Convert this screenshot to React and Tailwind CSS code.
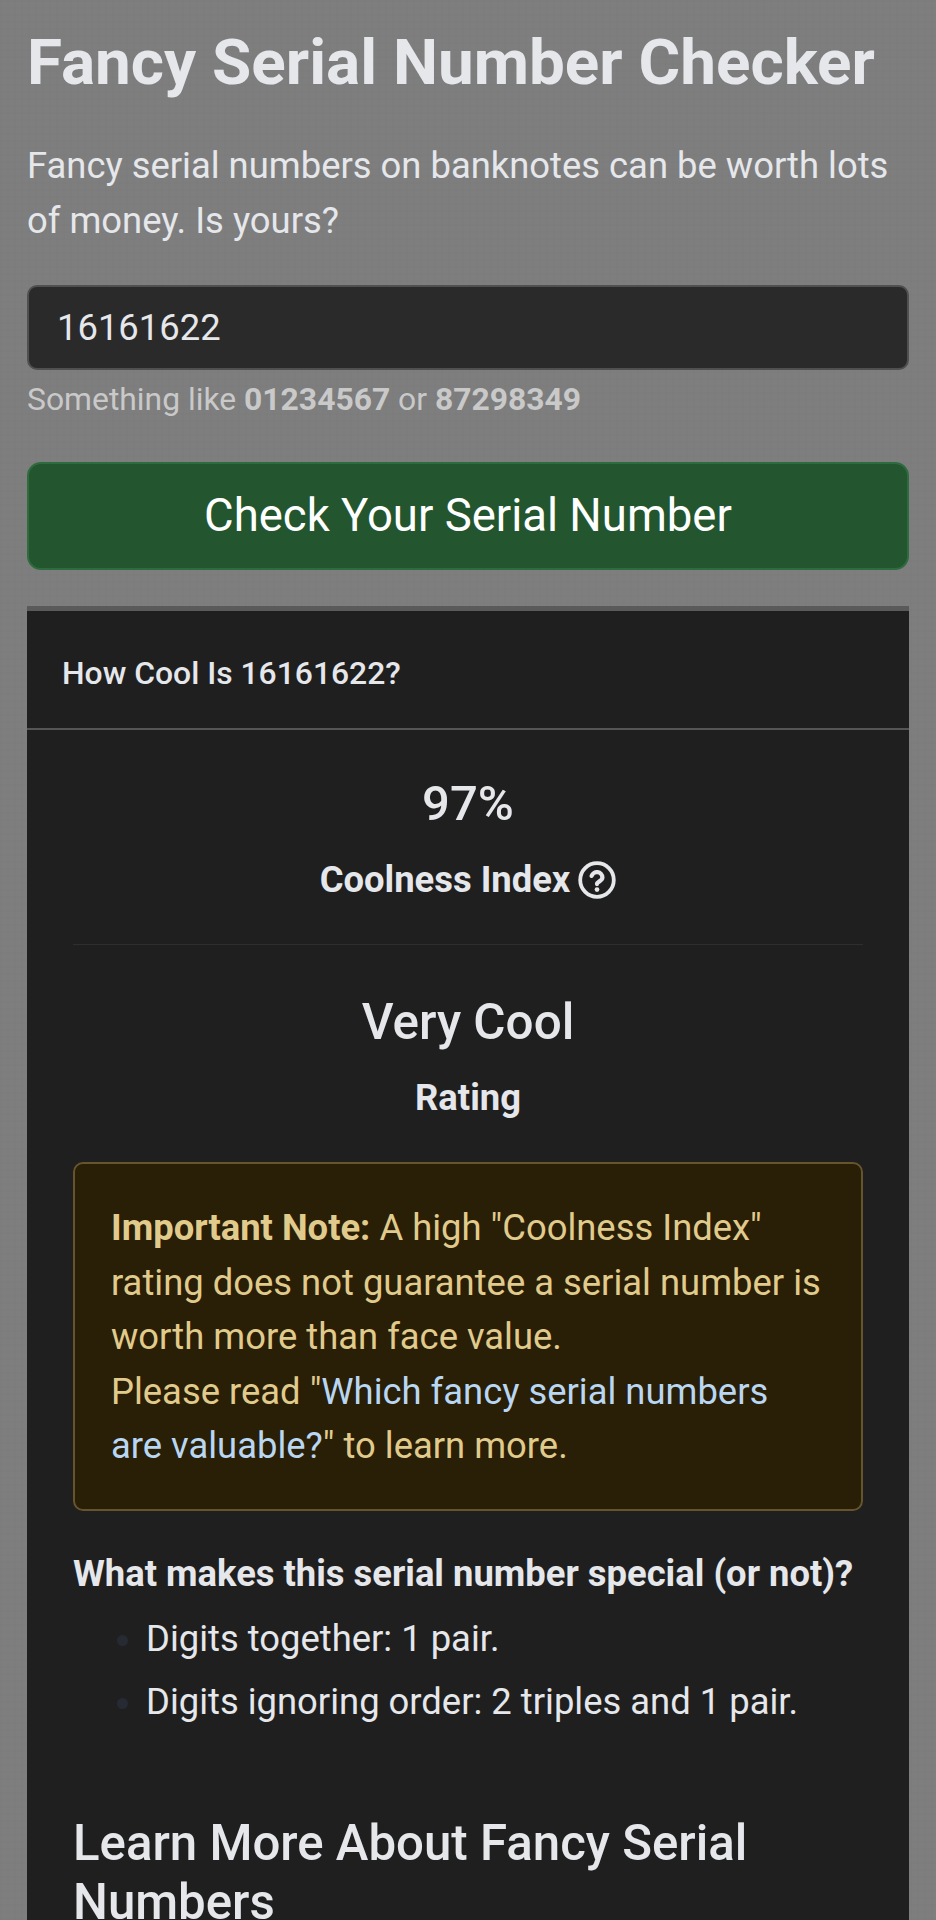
import React from "react";

export default function App() {
  return (
    <div className="h-[1920px] overflow-hidden bg-[#7e7e7e] bg-[repeating-linear-gradient(90deg,rgba(0,0,0,0.012)_0_2px,transparent_2px_7px),repeating-linear-gradient(0deg,rgba(0,0,0,0.008)_0_2px,transparent_2px_7px)] px-[27px] pt-[27px] font-['Roboto',sans-serif] text-[#e5e7eb]">
      <h1 className="text-[63.8px] font-bold leading-[72px]">Fancy Serial Number Checker</h1>
      <p className="mt-[40px] text-[36.4px] leading-[54.5px]">
        Fancy serial numbers on banknotes can be worth lots of money. Is yours?
      </p>
      <div className="mt-[37px] flex h-[85px] items-center rounded-[10px] border-2 border-[#505050] bg-[#2a2a2a] px-[28px] pt-[1px] text-[36.4px] text-[#e5e7eb]">
        16161622
      </div>
      <p className="mt-[9px] text-[31.85px] leading-[40px] text-[#c9c9c9]">
        Something like <b className="font-bold">01234567</b> or <b className="font-bold">87298349</b>
      </p>
      <button className="mt-[43px] block h-[108px] w-full rounded-[14px] border-2 border-[#2e6b3e] bg-[#23562f] text-center text-[45.5px] text-white">
        Check Your Serial Number
      </button>
      <section className="mt-[36px] border-t-[5px] border-[#5a5a5a] bg-[#1f1f1f] pb-[60px]">
        <h2 className="flex h-[119px] items-center border-b-2 border-[#555555] px-[35px] pt-[9px] text-[31.85px] font-medium">
          How Cool Is 16161622?
        </h2>
        <div className="px-[46px]">
          <div className="border-b border-[#2e2e2e] pb-[40px] pt-[47px] text-center">
            <div className="text-[49px] font-medium leading-[54px]">97%</div>
            <div className="mt-[25px] flex items-center justify-center gap-[8px] text-[36.4px] font-bold leading-[48px]">
              Coolness Index
              <svg viewBox="0 0 24 24" className="h-[38px] w-[38px]" fill="none" stroke="currentColor" strokeWidth="2.4">
                <circle cx="12" cy="12" r="10.6" />
                <path d="M8.6 9.4a3.5 3.5 0 0 1 6.8 1c0 2.3-3.4 2.5-3.4 4.2" strokeLinecap="round" strokeWidth="2.7" />
                <circle cx="12" cy="18" r="1.5" fill="currentColor" stroke="none" />
              </svg>
            </div>
          </div>
          <div className="pt-[45px] text-center">
            <div className="text-[49.4px] font-medium leading-[64px]">Very Cool</div>
            <div className="mt-[22px] text-[36.4px] font-bold leading-[44px]">Rating</div>
          </div>
          <div className="mt-[42px] rounded-[10px] border-2 border-[#66552c] bg-[#291e06] px-[36px] pb-[35px] pt-[37px] text-[36.4px] leading-[54.5px] text-[#e0cb8c]">
            <b className="font-bold">Important Note:</b> A high "Coolness Index" rating does not guarantee a serial number is worth more than face value.
            <br />
            Please read "<span className="text-[#b9d7f2]">Which fancy serial numbers are valuable?</span>" to learn more.
          </div>
          <h3 className="mt-[40px] whitespace-nowrap text-[36.4px] font-bold leading-[46px]">What makes this serial number special (or not)?</h3>
          <ul className="mt-[15px] list-disc pl-[73px] text-[36.4px] leading-[54.5px] marker:text-[#262a33]">
            <li className="mb-[9px]">Digits together: 1 pair.</li>
            <li>Digits ignoring order: 2 triples and 1 pair.</li>
          </ul>
          <h2 className="mt-[84px] text-[49.2px] font-medium leading-[59px]">Learn More About Fancy Serial Numbers</h2>
        </div>
      </section>
    </div>
  );
}
